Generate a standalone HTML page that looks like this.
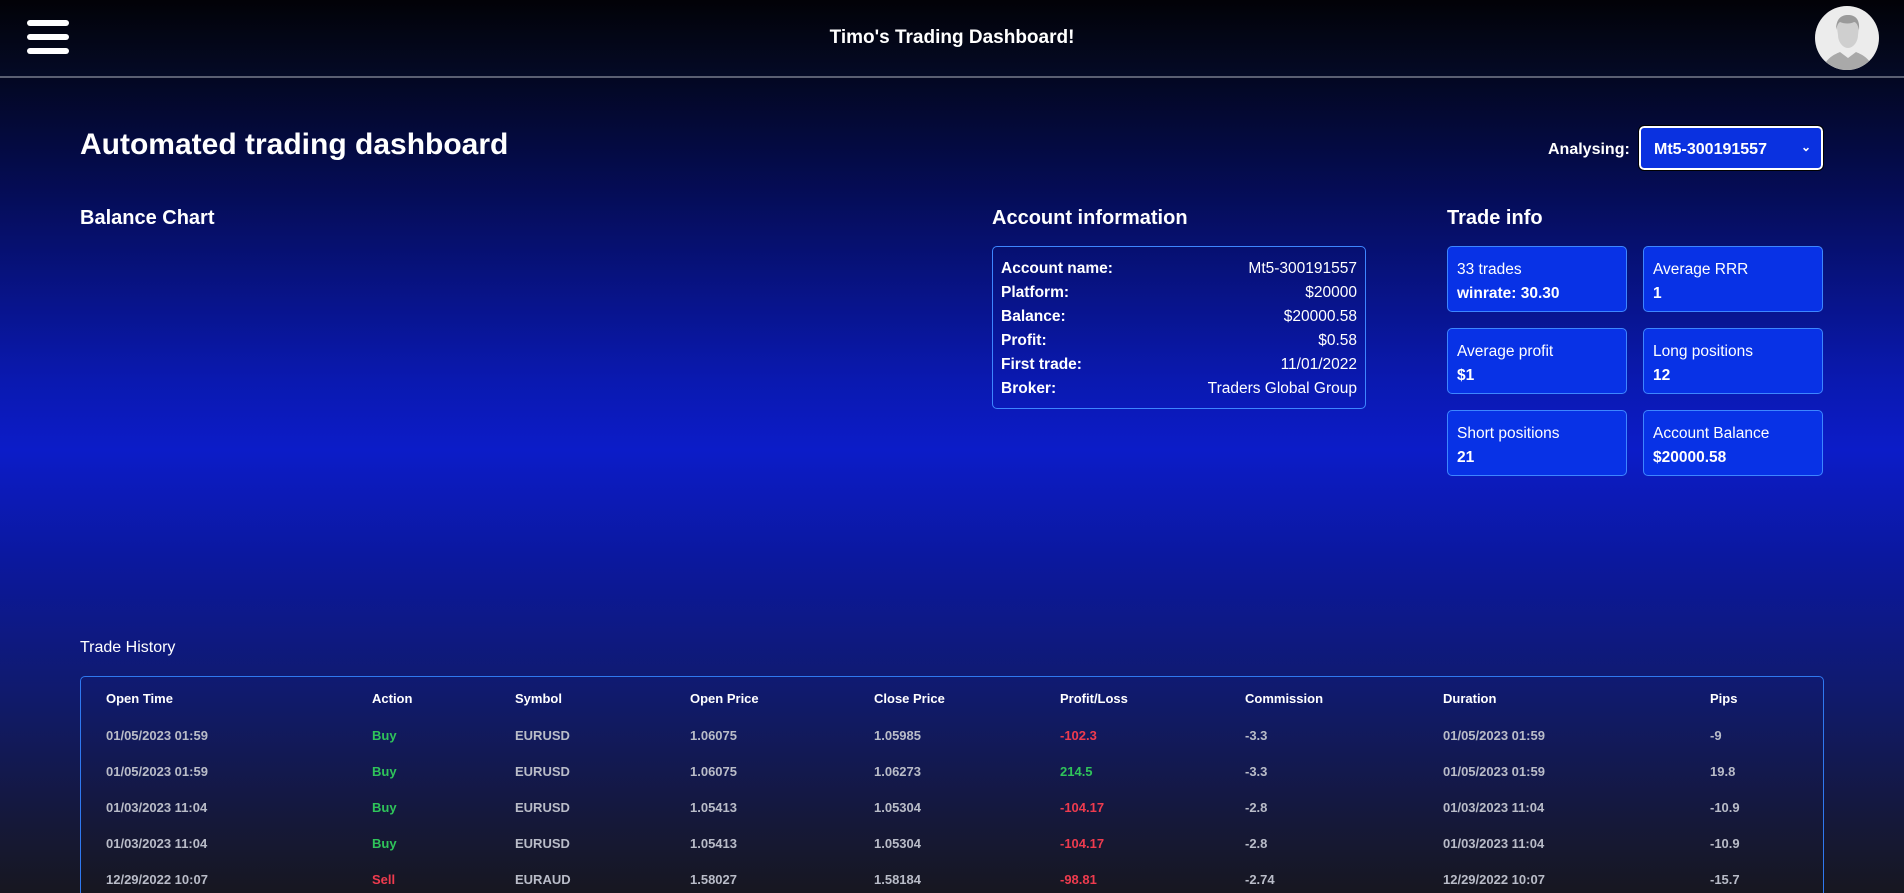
<!DOCTYPE html>
<html style="overflow:hidden;height:893px;background:#171720"><head><meta charset="utf-8"><style>
*{margin:0;padding:0;box-sizing:border-box}
body{width:1904px;height:893px;overflow:hidden;font-family:"Liberation Sans",sans-serif;color:#fff;
background:linear-gradient(180deg,#02030a 0px,#030722 78px,#050d5a 200px,#0a19b0 380px,#0c1cc8 450px,#0b189e 560px,#101a6a 700px,#15183a 820px,#171720 893px);position:relative}
.hdr{position:absolute;left:0;top:0;width:1904px;height:78px;background:linear-gradient(180deg,#020207,#040a26);border-bottom:2px solid #5a5f72}
.hb{position:absolute;left:27px;width:42px;height:6px;background:#fff;border-radius:3px}
.title{position:absolute;left:0;width:1904px;top:27px;text-align:center;font-weight:bold;font-size:19px}
.av{position:absolute;left:1815px;top:6px;width:64px;height:64px;border-radius:50%;background:#ececec;overflow:hidden}
.abs{position:absolute}
h1{position:absolute;left:80px;top:128px;font-size:30px;font-weight:bold}
h2{position:absolute;font-size:20px;font-weight:bold}
.sel{position:absolute;left:1639px;top:126px;width:184px;height:44px;background:#0a31e0;border:2px solid #fff;border-radius:5px;font-weight:bold;font-size:16px;padding:13px 0 0 13px;outline:1px solid #000}
.acc{position:absolute;left:992px;top:246px;width:374px;height:163px;border:1px solid #3d86ff;border-radius:5px;padding:13px 8px 0 8px;font-size:15.5px}
.acc div{display:flex;justify-content:space-between;height:24px}
.acc b{font-weight:bold}
.card{position:absolute;width:180px;height:66px;background:#0832e6;border:1px solid #3d86ff;border-radius:5px;padding:11px 0 0 9px;font-size:15.5px;line-height:24px}
.tbl{position:absolute;left:80px;top:676px;width:1744px;height:230px;border:1px solid #2f78f0;border-radius:5px}
.c{position:absolute;font-size:13px;font-weight:bold;color:#b9bcc8}
.h{color:#fff}
.g{color:#2fc45a}.r{color:#ee3b4e}
</style></head><body>
<div class="hdr">
<div class="hb" style="top:20px"></div><div class="hb" style="top:34px"></div><div class="hb" style="top:48px"></div>
<div class="title">Timo's Trading Dashboard!</div>
<div class="av"><svg width="64" height="64" viewBox="0 0 64 64"><path d="M22 22c0-9 5-13 11-13s11 4 11 12l-1 8c0 7-5 13-10 13s-10-6-10-13z" fill="#cfcfcf"/><path d="M21 24c0-10 4-15 12-15s12 5 11 15c-1-5-3-8-5-8-3 2-10 2-14 0-2 1-3 4-4 8z" fill="#9a9a9a"/><path d="M8 64c2-11 10-15 17-18l8 6 8-6c7 3 15 7 17 18z" fill="#a9a9a9"/></svg></div>
</div>
<h1>Automated trading dashboard</h1>
<div class="abs" style="left:1548px;top:141px;font-size:16px;font-weight:bold">Analysing:</div>
<div class="sel">Mt5-300191557<span style="position:absolute;right:10px;top:12px;font-size:12px">&#8964;</span></div>
<h2 style="left:80px;top:207px">Balance Chart</h2>
<h2 style="left:992px;top:207px">Account information</h2>
<h2 style="left:1447px;top:207px">Trade info</h2>
<div class="acc">
<div><b>Account name:</b><span>Mt5-300191557</span></div>
<div><b>Platform:</b><span>$20000</span></div>
<div><b>Balance:</b><span>$20000.58</span></div>
<div><b>Profit:</b><span>$0.58</span></div>
<div><b>First trade:</b><span>11/01/2022</span></div>
<div><b>Broker:</b><span>Traders Global Group</span></div>
</div>
<div class="card" style="left:1447px;top:246px">33 trades<br><b>winrate: 30.30</b></div>
<div class="card" style="left:1643px;top:246px">Average RRR<br><b>1</b></div>
<div class="card" style="left:1447px;top:328px">Average profit<br><b>$1</b></div>
<div class="card" style="left:1643px;top:328px">Long positions<br><b>12</b></div>
<div class="card" style="left:1447px;top:410px">Short positions<br><b>21</b></div>
<div class="card" style="left:1643px;top:410px">Account Balance<br><b>$20000.58</b></div>
<div class="abs" style="left:80px;top:639px;font-size:16px">Trade History</div>
<div class="tbl"></div>
<div id="t"></div>
<script>
var xs=[106,372,515,690,874,1060,1245,1443,1710];
var rows=[["Open Time","Action","Symbol","Open Price","Close Price","Profit/Loss","Commission","Duration","Pips"],
["01/05/2023 01:59","Buy","EURUSD","1.06075","1.05985","-102.3","-3.3","01/05/2023 01:59","-9"],
["01/05/2023 01:59","Buy","EURUSD","1.06075","1.06273","214.5","-3.3","01/05/2023 01:59","19.8"],
["01/03/2023 11:04","Buy","EURUSD","1.05413","1.05304","-104.17","-2.8","01/03/2023 11:04","-10.9"],
["01/03/2023 11:04","Buy","EURUSD","1.05413","1.05304","-104.17","-2.8","01/03/2023 11:04","-10.9"],
["12/29/2022 10:07","Sell","EURAUD","1.58027","1.58184","-98.81","-2.74","12/29/2022 10:07","-15.7"]];
var ys=[691,728,764,800,836,872],h="";
rows.forEach(function(r,i){r.forEach(function(v,j){var cl="c";if(i==0)cl+=" h";else if(j==1)cl+=v=="Buy"?" g":" r";else if(j==5)cl+=v[0]=="-"?" r":" g";
h+='<div class="'+cl+'" style="left:'+xs[j]+'px;top:'+ys[i]+'px">'+v+'</div>';});});
document.getElementById("t").innerHTML=h;
</script>
</body></html>
